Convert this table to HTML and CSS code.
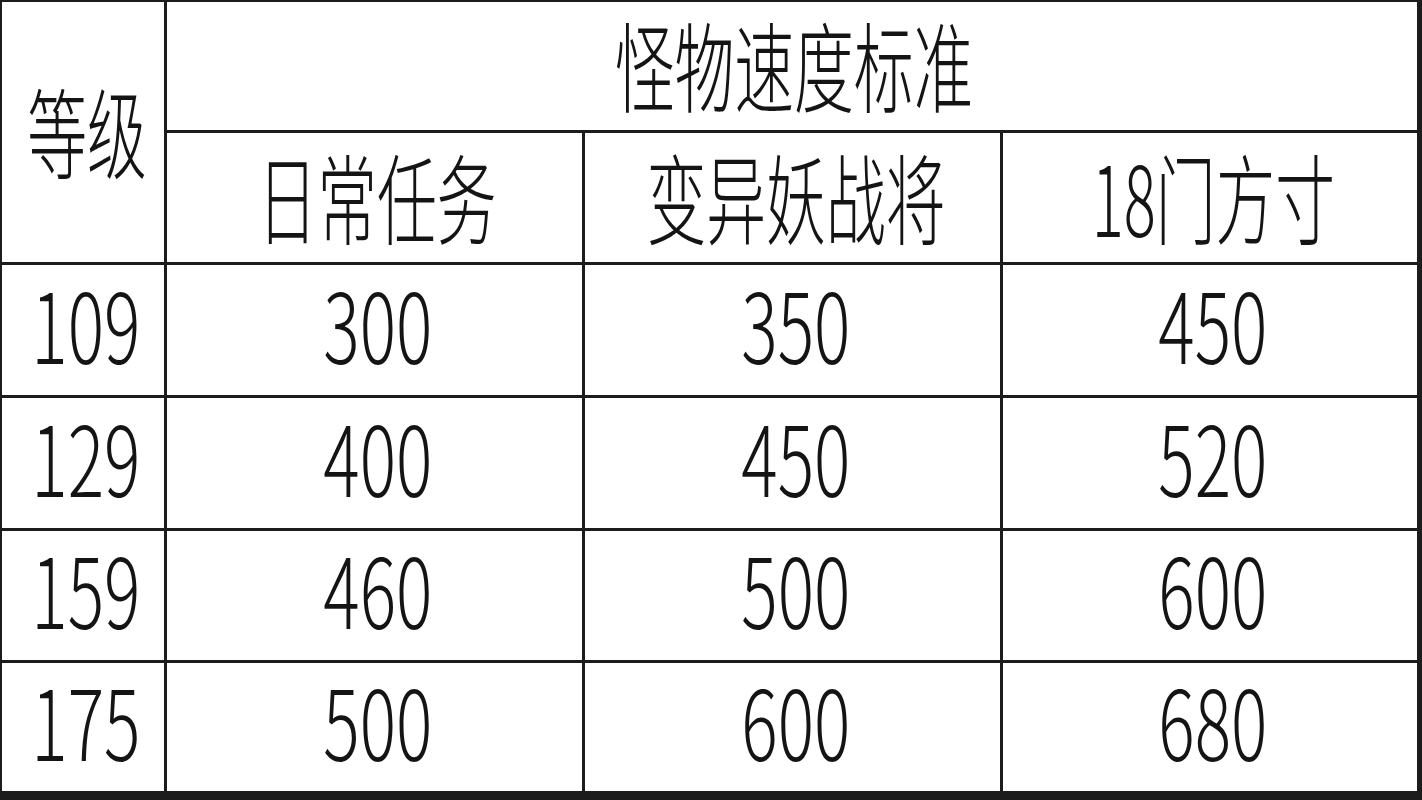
FILE: index.html
```html
<!DOCTYPE html>
<html lang="zh-CN">
<head>
<meta charset="utf-8">
<title>怪物速度标准</title>
<link rel="stylesheet" href="styles.css">
</head>
<body>
<div class="sheet">
  <div class="cell level-head"><span class="cjk">等级</span></div>
  <div class="cell title"><span class="cjk">怪物速度标准</span></div>
  <div class="cell"><span class="cjk">日常任务</span></div>
  <div class="cell"><span class="cjk">变异妖战将</span></div>
  <div class="cell"><span class="cjk">18门方寸</span></div>

  <div class="cell"><span class="num">109</span></div>
  <div class="cell"><span class="num">300</span></div>
  <div class="cell"><span class="num">350</span></div>
  <div class="cell"><span class="num">450</span></div>

  <div class="cell"><span class="num">129</span></div>
  <div class="cell"><span class="num">400</span></div>
  <div class="cell"><span class="num">450</span></div>
  <div class="cell"><span class="num">520</span></div>

  <div class="cell"><span class="num">159</span></div>
  <div class="cell"><span class="num">460</span></div>
  <div class="cell"><span class="num">500</span></div>
  <div class="cell"><span class="num">600</span></div>

  <div class="cell"><span class="num">175</span></div>
  <div class="cell"><span class="num">500</span></div>
  <div class="cell"><span class="num">600</span></div>
  <div class="cell"><span class="num">680</span></div>
</div>
</body>
</html>
```

FILE: styles.css
```css
html, body {
  margin: 0;
  padding: 0;
  background: #ffffff;
}

.sheet {
  width: 1422px;
  height: 800px;
  box-sizing: border-box;
  background: #1c1c1c;
  padding: 2px 5px 9px 2px;
  display: grid;
  grid-template-columns: 162px 415px 415px 414px;
  grid-template-rows: 128px 129px 130px 130px 129px 128px;
  gap: 3px;
}

.cell {
  background: #ffffff;
  display: flex;
  align-items: center;
  justify-content: center;
  padding-left: 6px;
  color: #141414;
  font-family: "Noto Sans CJK SC", "Noto Sans", sans-serif;
}

.level-head {
  grid-row: 1 / span 2;
  padding-left: 8px;
}

.title {
  grid-column: 2 / span 3;
  padding-left: 4px;
}

.cjk {
  display: inline-block;
  font-size: 98px;
  line-height: 1;
  font-weight: 300;
  white-space: nowrap;
  transform: translateY(-4px) scaleX(0.61);
}

.num {
  display: inline-block;
  font-size: 97px;
  line-height: 1;
  font-weight: 300;
  white-space: nowrap;
  transform: translateY(-9px) scaleX(0.70);
}
```
